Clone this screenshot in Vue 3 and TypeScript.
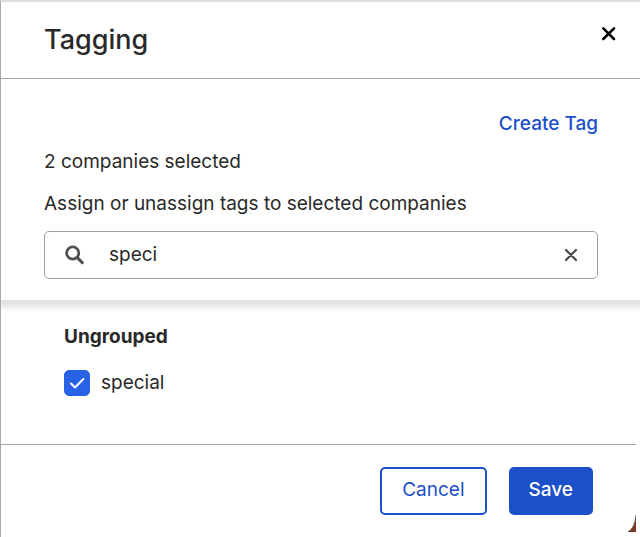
<script setup lang="ts">
import { computed, ref } from 'vue'

interface Tag {
  id: string
  name: string
  checked: boolean
}

const selectedCount = ref(2)
const query = ref('speci')
const tags = ref<Tag[]>([{ id: 'tag-special', name: 'special', checked: true }])

const visibleTags = computed(() =>
  tags.value.filter((tag) => tag.name.includes(query.value.trim().toLowerCase())),
)
</script>

<template>
  <section class="dialog" role="dialog" aria-labelledby="dialog-title">
    <header class="header">
      <h1 id="dialog-title" class="title">Tagging</h1>
      <button type="button" class="icon-button close" aria-label="Close">
        <svg width="16" height="16" viewBox="0 0 16 16" aria-hidden="true">
          <path d="M2.3 2.3 13 13M13 2.3 2.3 13" fill="none" stroke="#000" stroke-width="2.6" stroke-linecap="round" />
        </svg>
      </button>
    </header>

    <div class="controls">
      <a href="#" class="create">Create Tag</a>
      <p class="count">{{ selectedCount }} companies selected</p>
      <label class="prompt" for="tag-search">Assign or unassign tags to selected companies</label>
      <div class="search">
        <svg class="search-icon" width="20" height="20" viewBox="0 0 20 20" aria-hidden="true">
          <circle cx="7.7" cy="8" r="6.1" fill="none" stroke="#505050" stroke-width="2.7" />
          <path d="M12.3 12.6 17.3 17.6" fill="none" stroke="#505050" stroke-width="3" stroke-linecap="round" />
        </svg>
        <input id="tag-search" v-model="query" class="search-input" type="text" autocomplete="off" />
        <button type="button" class="icon-button" aria-label="Clear search" @click="query = ''">
          <svg width="16" height="16" viewBox="0 0 16 16" aria-hidden="true">
            <path d="M3 3 13 13M13 3 3 13" fill="none" stroke="#4a4a4a" stroke-width="2.2" stroke-linecap="round" />
          </svg>
        </button>
      </div>
    </div>

    <div class="results">
      <h2 class="group">Ungrouped</h2>
      <label v-for="tag in visibleTags" :key="tag.id" class="tag">
        <span class="box">
          <input v-model="tag.checked" type="checkbox" class="checkbox" />
          <svg v-if="tag.checked" class="tick" width="26" height="26" viewBox="0 0 26 26" aria-hidden="true">
            <path d="M7 13.5 11 17.5 19.3 9" fill="none" stroke="#fff" stroke-width="2" stroke-linecap="round" stroke-linejoin="round" />
          </svg>
        </span>
        <span>{{ tag.name }}</span>
      </label>
    </div>

    <footer class="footer">
      <button type="button" class="button secondary">Cancel</button>
      <button type="button" class="button primary">Save</button>
      <svg class="corner" width="8" height="18" viewBox="0 0 8 18" aria-hidden="true">
        <path d="M8 3C7.500 10 5 15 0 18H8Z" fill="#7f3820" />
        <path d="M8 1C7.500 9 5 15 0 18" fill="none" stroke="#4b3b35" stroke-width="1" />
      </svg>
    </footer>
  </section>
</template>

<style>
body {
  margin: 0;
  background: #fff;
}
</style>

<style scoped>
.dialog {
  box-sizing: border-box;
  min-height: 100vh;
  display: flex;
  flex-direction: column;
  border-top: 2px solid #dcdcdc;
  border-left: 1px solid #aaa;
  background: #fff;
  color: #292929;
  font: 400 19px/24px Inter, "Liberation Sans", sans-serif;
}

.header {
  display: flex;
  align-items: center;
  justify-content: space-between;
  padding: 20px 23px 20px 43px;
  border-bottom: 1px solid #a6a6a6;
}

.title {
  margin: 0;
  font-size: 27px;
  line-height: 36px;
  font-weight: 500;
}

.icon-button {
  display: flex;
  padding: 0;
  border: 0;
  background: none;
  cursor: pointer;
}

.close {
  margin-bottom: 12px;
}

.controls {
  display: flex;
  flex-direction: column;
  padding: 33px 42px 21px 43px;
}

.create {
  align-self: flex-end;
  color: #1b50c8;
  font-weight: 500;
  text-decoration: none;
}

.count {
  margin: 14px 0 18px;
}

.search {
  display: flex;
  align-items: center;
  margin-top: 15px;
  padding: 0 18px 0 20px;
  border: 1px solid #a0a0a0;
  border-radius: 5px;
}

.search-icon {
  flex: none;
}

.search-input {
  flex: 1;
  min-width: 0;
  height: 46px;
  box-sizing: border-box;
  padding: 0 24px 2px;
  border: 0;
  outline: 0;
  background: none;
  color: inherit;
  font: inherit;
}

.results {
  flex: 1;
  padding: 25px 63px 45px;
  background: linear-gradient(#e1e1e1, #e5e5e5 4px, #fff 12px);
}

.group {
  margin: 0 0 21px;
  font-size: 19px;
  line-height: 24px;
  font-weight: 700;
}

.tag {
  display: flex;
  align-items: center;
  gap: 11px;
}

.box {
  display: grid;
}

.checkbox {
  grid-area: 1 / 1;
  appearance: none;
  width: 26px;
  height: 26px;
  margin: 0;
  border: 1px solid #a0a0a0;
  border-radius: 5px;
  background: #fff;
}

.checkbox:checked {
  border-color: #2863e6;
  background: #2863e6;
}

.tick {
  grid-area: 1 / 1;
  pointer-events: none;
}

.footer {
  position: relative;
  display: flex;
  justify-content: flex-end;
  gap: 22px;
  margin-right: 4px;
  padding: 22px 43px;
  border-top: 1px solid #a6a6a6;
}

.button {
  height: 48px;
  padding: 0 20px 2px;
  border: 2px solid #1b50c8;
  border-radius: 5px;
  font: inherit;
  cursor: pointer;
}

.secondary {
  background: #fff;
  color: #1b50c8;
}

.primary {
  padding: 0 18px 2px;
  background: #1b50c8;
  color: #fff;
  font-weight: 500;
}

.corner {
  position: absolute;
  right: 0;
  bottom: 5px;
}
</style>
